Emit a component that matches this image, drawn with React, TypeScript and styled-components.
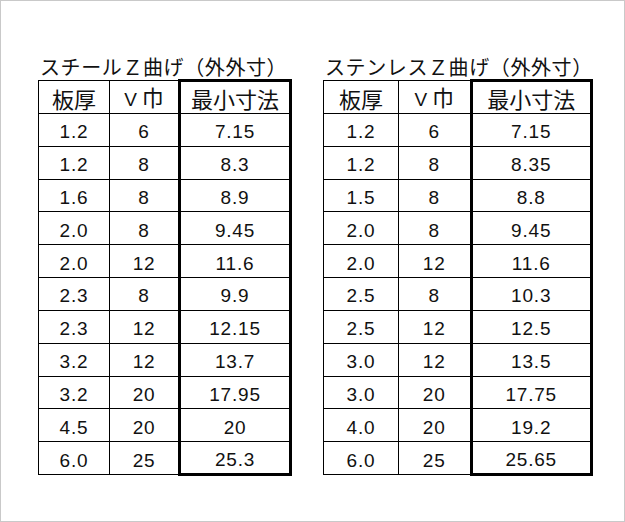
import React from 'react';
import styled, { createGlobalStyle } from 'styled-components';

const GlobalStyle = createGlobalStyle`
  html, body {
    margin: 0;
    padding: 0;
    background: #ffffff;
  }
`;

const Frame = styled.div`
  box-sizing: border-box;
  width: 625px;
  height: 522px;
  border: 1px solid #c9c9c9;
  background: #ffffff;
  display: flex;
  align-items: flex-start;
  gap: 31px;
  padding: 53px 0 0 37px;
  font-family: "Noto Sans CJK JP", "Liberation Sans", sans-serif;
  color: #111;
`;

const Block = styled.div`
  display: flex;
  flex-direction: column;
`;

const Title = styled.div`
  font-size: 20px;
  line-height: 25px;
  height: 25px;
  white-space: nowrap;
  padding-left: 2px;
  font-feature-settings: "fwid" 1;
  letter-spacing: 0.6px;
`;

const Table = styled.table`
  border-collapse: collapse;
  table-layout: fixed;
`;

const Row = styled.tr`
  height: 32.85px;
`;

const Cell = styled.td<{ $w: number; $key?: boolean; $first?: boolean; $last?: boolean }>`
  width: ${p => p.$w}px;
  border: 1px solid #000;
  padding: 4px 0 0 0;
  text-align: center;
  vertical-align: middle;
  font-family: "Liberation Sans", "Noto Sans CJK JP", sans-serif;
  font-size: 19px;
  letter-spacing: 0.8px;
  line-height: 25px;
  box-sizing: border-box;
  ${p => p.$key && `
    border-left: 3px solid #000;
    border-right: 3px solid #000;
  `}
  ${p => p.$key && p.$first && `border-top: 3px solid #000;`}
  ${p => p.$key && p.$last && `border-bottom: 3px solid #000;`}
`;

const Head = styled(Cell)`
  font-family: "Noto Sans CJK JP", sans-serif;
  font-size: 22px;
  letter-spacing: 0;
  padding: 3px 0 0 0;
`;

const VMark = styled.span`
  font-family: "Liberation Sans", sans-serif;
  font-size: 19px;
  margin-right: 5px;
`;

type Spec = {
  title: string;
  widths: [number, number, number];
  rows: [string, string, string][];
};

const specs: Spec[] = [
  {
    title: 'スチールZ曲げ(外外寸)',
    widths: [71, 70, 111],
    rows: [
      ['1.2', '6', '7.15'],
      ['1.2', '8', '8.3'],
      ['1.6', '8', '8.9'],
      ['2.0', '8', '9.45'],
      ['2.0', '12', '11.6'],
      ['2.3', '8', '9.9'],
      ['2.3', '12', '12.15'],
      ['3.2', '12', '13.7'],
      ['3.2', '20', '17.95'],
      ['4.5', '20', '20'],
      ['6.0', '25', '25.3'],
    ],
  },
  {
    title: 'ステンレスZ曲げ(外外寸)',
    widths: [71, 69, 114],
    rows: [
      ['1.2', '6', '7.15'],
      ['1.2', '8', '8.35'],
      ['1.5', '8', '8.8'],
      ['2.0', '8', '9.45'],
      ['2.0', '12', '11.6'],
      ['2.5', '8', '10.3'],
      ['2.5', '12', '12.5'],
      ['3.0', '12', '13.5'],
      ['3.0', '20', '17.75'],
      ['4.0', '20', '19.2'],
      ['6.0', '25', '25.65'],
    ],
  },
];

const BendTable = ({ spec }: { spec: Spec }) => {
  const [a, b, c] = spec.widths;
  const last = spec.rows.length - 1;
  return (
    <Block>
      <Title>{spec.title}</Title>
      <Table>
        <tbody>
          <Row>
            <Head $w={a}>板厚</Head>
            <Head $w={b}><VMark>V</VMark>巾</Head>
            <Head $w={c} $key $first>最小寸法</Head>
          </Row>
          {spec.rows.map((r, i) => (
            <Row key={i}>
              <Cell $w={a}>{r[0]}</Cell>
              <Cell $w={b}>{r[1]}</Cell>
              <Cell $w={c} $key $last={i === last}>{r[2]}</Cell>
            </Row>
          ))}
        </tbody>
      </Table>
    </Block>
  );
};

export default function App() {
  return (
    <>
      <GlobalStyle />
      <Frame>
        {specs.map(s => (
          <BendTable key={s.title} spec={s} />
        ))}
      </Frame>
    </>
  );
}
